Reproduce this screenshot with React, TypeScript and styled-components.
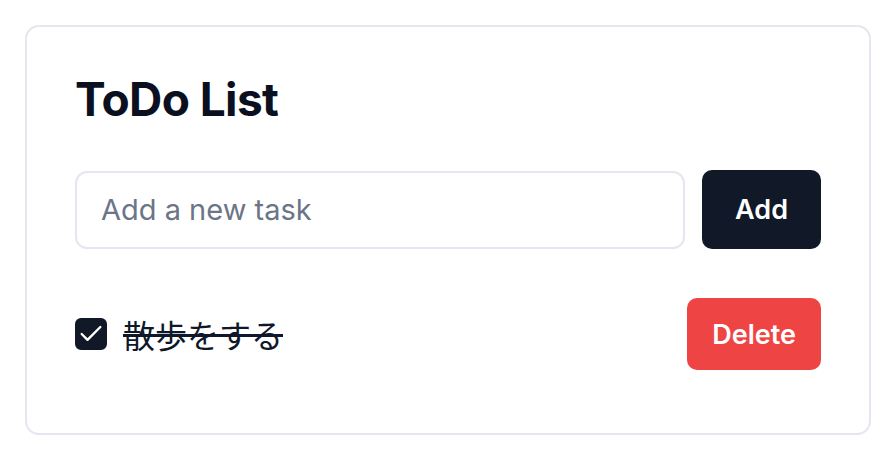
import * as React from "react";
import styled, { createGlobalStyle } from "styled-components";

const GlobalStyle = createGlobalStyle`
  html, body {
    margin: 0;
    padding: 0;
    background: #ffffff;
  }
  body {
    font-family: Inter, "Noto Sans CJK JP", sans-serif;
    color: #0f172a;
  }
  * { box-sizing: border-box; }
`;

type Task = { id: number; text: string; done: boolean };

export default function App() {
  const [tasks, setTasks] = React.useState<Task[]>([
    { id: 1, text: "散歩をする", done: true },
  ]);
  const [value, setValue] = React.useState("");

  const addTask = () => {
    if (!value.trim()) return;
    setTasks([...tasks, { id: Date.now(), text: value, done: false }]);
    setValue("");
  };

  return (
    <>
      <GlobalStyle />
      <Page>
        <Card>
          <Title>ToDo List</Title>
          <InputRow>
            <TaskInput
              placeholder="Add a new task"
              value={value}
              onChange={(e) => setValue(e.target.value)}
            />
            <Button $variant="primary" $height={79} $padX={33} onClick={addTask}>
              Add
            </Button>
          </InputRow>
          <List>
            {tasks.map((t) => (
              <Item key={t.id}>
                <ItemLabel>
                  <Check
                    $checked={t.done}
                    onClick={() =>
                      setTasks(tasks.map((x) => (x.id === t.id ? { ...x, done: !x.done } : x)))
                    }
                  >
                    {t.done && (
                      <svg width="28" height="28" viewBox="0 0 24 24" fill="none" stroke="#fff" strokeWidth="2" strokeLinecap="round" strokeLinejoin="round">
                        <path d="M20 6 9 17l-5-5" />
                      </svg>
                    )}
                  </Check>
                  <ItemText $done={t.done}>{t.text}</ItemText>
                </ItemLabel>
                <Button
                  $variant="danger"
                  $height={72}
                  $padX={25}
                  onClick={() => setTasks(tasks.filter((x) => x.id !== t.id))}
                >
                  Delete
                </Button>
              </Item>
            ))}
          </List>
        </Card>
      </Page>
    </>
  );
}

const Page = styled.div`
  padding: 25px;
`;

const Card = styled.div`
  width: 846px;
  height: 410px;
  border: 2px solid #e4e6f0;
  border-radius: 14px;
  padding: 44px 48px;
  background: #fff;
`;

const Title = styled.h1`
  margin: 0 0 42px;
  font-size: 46px;
  font-weight: 700;
  line-height: 57px;
  letter-spacing: -0.6px;
  color: #0b1020;
`;

const InputRow = styled.div`
  display: flex;
  gap: 17px;
  align-items: center;
`;

const TaskInput = styled.input`
  flex: 1;
  height: 78px;
  border: 2px solid #e4e6f0;
  border-radius: 12px;
  padding: 0 24px;
  font-family: Inter, "Noto Sans CJK JP", sans-serif;
  font-size: 29px;
  color: #0f172a;
  outline: none;
  &::placeholder {
    color: #6b7588;
  }
`;

const Button = styled.button<{ $variant: "primary" | "danger"; $height: number; $padX: number }>`
  height: ${(p) => p.$height}px;
  padding: 0 ${(p) => p.$padX}px;
  border: none;
  border-radius: 10px;
  background: ${(p) => (p.$variant === "primary" ? "#111827" : "#ef4444")};
  color: #fff;
  font-family: Inter, sans-serif;
  font-size: 27px;
  font-weight: 600;
  cursor: pointer;
`;

const List = styled.ul`
  list-style: none;
  margin: 49px 0 0;
  padding: 0;
`;

const Item = styled.li`
  display: flex;
  align-items: center;
  justify-content: space-between;
`;

const ItemLabel = styled.div`
  display: flex;
  align-items: center;
  gap: 16px;
`;

const Check = styled.span<{ $checked: boolean }>`
  width: 32px;
  height: 32px;
  border-radius: 6px;
  display: flex;
  align-items: center;
  justify-content: center;
  background: ${(p) => (p.$checked ? "#111827" : "#fff")};
  border: 2px solid #111827;
  cursor: pointer;
`;

const ItemText = styled.span<{ $done: boolean }>`
  font-family: "Noto Sans CJK JP", sans-serif;
  font-size: 32px;
  line-height: 1.2;
  color: #0f172a;
  text-decoration: ${(p) => (p.$done ? "line-through" : "none")};
  text-decoration-thickness: 3px;
`;
